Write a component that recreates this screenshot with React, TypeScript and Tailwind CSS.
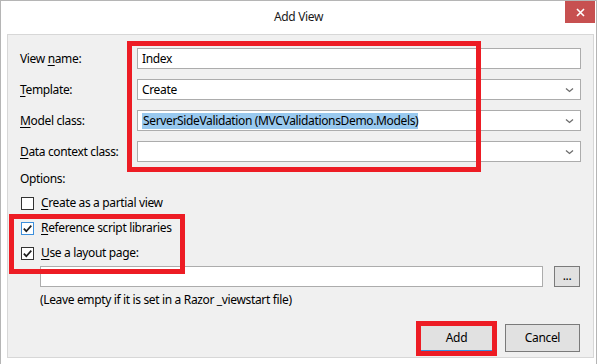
import React from "react";

// --- Small helper pieces ---
const Chevron = () => (
  <svg width="9" height="6" viewBox="0 0 9 6" className="shrink-0">
    <path d="M1 1.5 L4.5 4.5 L8 1.5" fill="none" stroke="#6d6d6d" strokeWidth="1.3" />
  </svg>
);

const CheckMark = () => (
  <svg width="11" height="11" viewBox="0 0 11 11">
    <path d="M1.8 5.6 L4.3 8.2 L9.3 2.6" fill="none" stroke="#1e1e1e" strokeWidth="1.7" />
  </svg>
);

const TextBox = ({ children, combo }: { children?: React.ReactNode; combo?: boolean }) => (
  <div className="h-[21px] bg-white border border-[#acacac] flex items-center pl-[4px] pr-[6px]">
    <div className="flex-1 truncate">{children}</div>
    {combo && <Chevron />}
  </div>
);

const CheckRow = ({
  checked,
  focused,
  children,
}: {
  checked?: boolean;
  focused?: boolean;
  children: React.ReactNode;
}) => (
  <div className="h-[16px] flex items-center">
    <div
      className={
        "ml-[1px] w-[13px] h-[13px] bg-white border flex items-center justify-center " +
        (focused ? "border-[#3c8fdc]" : "border-[#333333]")
      }
    >
      {checked && <CheckMark />}
    </div>
    <span className="ml-[7px]">{children}</span>
  </div>
);

const U = ({ children }: { children: React.ReactNode }) => (
  <span className="underline underline-offset-[2px]">{children}</span>
);

export default function App() {
  return (
    <div
      className="relative w-[597px] h-[364px] bg-white border border-b-0 border-[#b5b5b5] text-[12px] tracking-[-0.35px] text-black overflow-hidden"
      style={{ fontFamily: '"Noto Sans", "Open Sans", sans-serif' }}
    >
      {/* title bar */}
      <div className="relative h-[33px] flex items-center justify-center">
        <span className="text-[12px] text-[#1a1a1a] -mt-[1px]">Add View</span>
        <div className="absolute right-[1px] top-[0px] w-[30px] h-[22px] bg-[#c75050] flex items-center justify-center">
          <svg width="9" height="9" viewBox="0 0 9 9">
            <path d="M1 1 L8 8 M8 1 L1 8" stroke="white" strokeWidth="1.6" />
          </svg>
        </div>
      </div>

      {/* dialog body */}
      <div className="ml-[6px] w-[587px] h-[324px] bg-[#f0f0f0] border border-[#d7d7d7] pt-[13px] px-[12px]">
        <div className="grid grid-cols-[117px_1fr] gap-y-[10px] items-center">
          <span>
            View <U>n</U>ame:
          </span>
          <TextBox>Index</TextBox>
          <span>
            <U>T</U>emplate:
          </span>
          <TextBox combo>Create</TextBox>
          <span>
            <U>M</U>odel class:
          </span>
          <TextBox combo>
            <span className="bg-[#99c9ef] inline-block leading-[16px] pl-[1px]">
              ServerSideValidation (MVCValidationsDemo.Models)
            </span>
          </TextBox>
          <span>
            <U>D</U>ata context class:
          </span>
          <TextBox combo />
        </div>

        <div className="mt-[9px] h-[16px] flex items-center">Options:</div>

        <div className="mt-[8px] flex flex-col gap-[9px]">
          <CheckRow>
            <U>C</U>reate as a partial view
          </CheckRow>
          <CheckRow checked focused>
            <U>R</U>eference script libraries
          </CheckRow>
          <CheckRow checked>
            <U>U</U>se a layout page:
          </CheckRow>
        </div>

        <div className="mt-[5px] ml-[20px] flex items-center gap-[11px]">
          <div className="flex-1 h-[21px] bg-white border border-[#acacac]" />
          <div className="w-[26px] h-[21px] mr-[1px] bg-[#e1e1e1] border border-[#7a7a7a] flex items-center justify-center leading-none pb-[2px]">
            ...
          </div>
        </div>
        <div className="mt-[5px] ml-[20px] h-[16px] flex items-center">
          (Leave empty if it is set in a Razor _viewstart file)
        </div>

        <div className="mt-[16px] flex justify-end gap-[11px] pr-[1px]">
          <button className="w-[75px] h-[28px] bg-[#e1e1e1] border-2 border-[#3c8fdc]">Add</button>
          <button className="w-[75px] h-[28px] bg-[#e1e1e1] border border-[#7a7a7a]">Cancel</button>
        </div>
      </div>

      {/* red annotation boxes */}
      <div className="absolute left-[126px] top-[40px] w-[354px] h-[131px] border-[5px] border-[#ed1c24]" />
      <div className="absolute left-[8px] top-[213px] w-[176px] h-[60px] border-[5px] border-[#ed1c24]" />
      <div className="absolute left-[415px] top-[320px] w-[81px] h-[35px] border-[5px] border-[#ed1c24]" />
    </div>
  );
}
